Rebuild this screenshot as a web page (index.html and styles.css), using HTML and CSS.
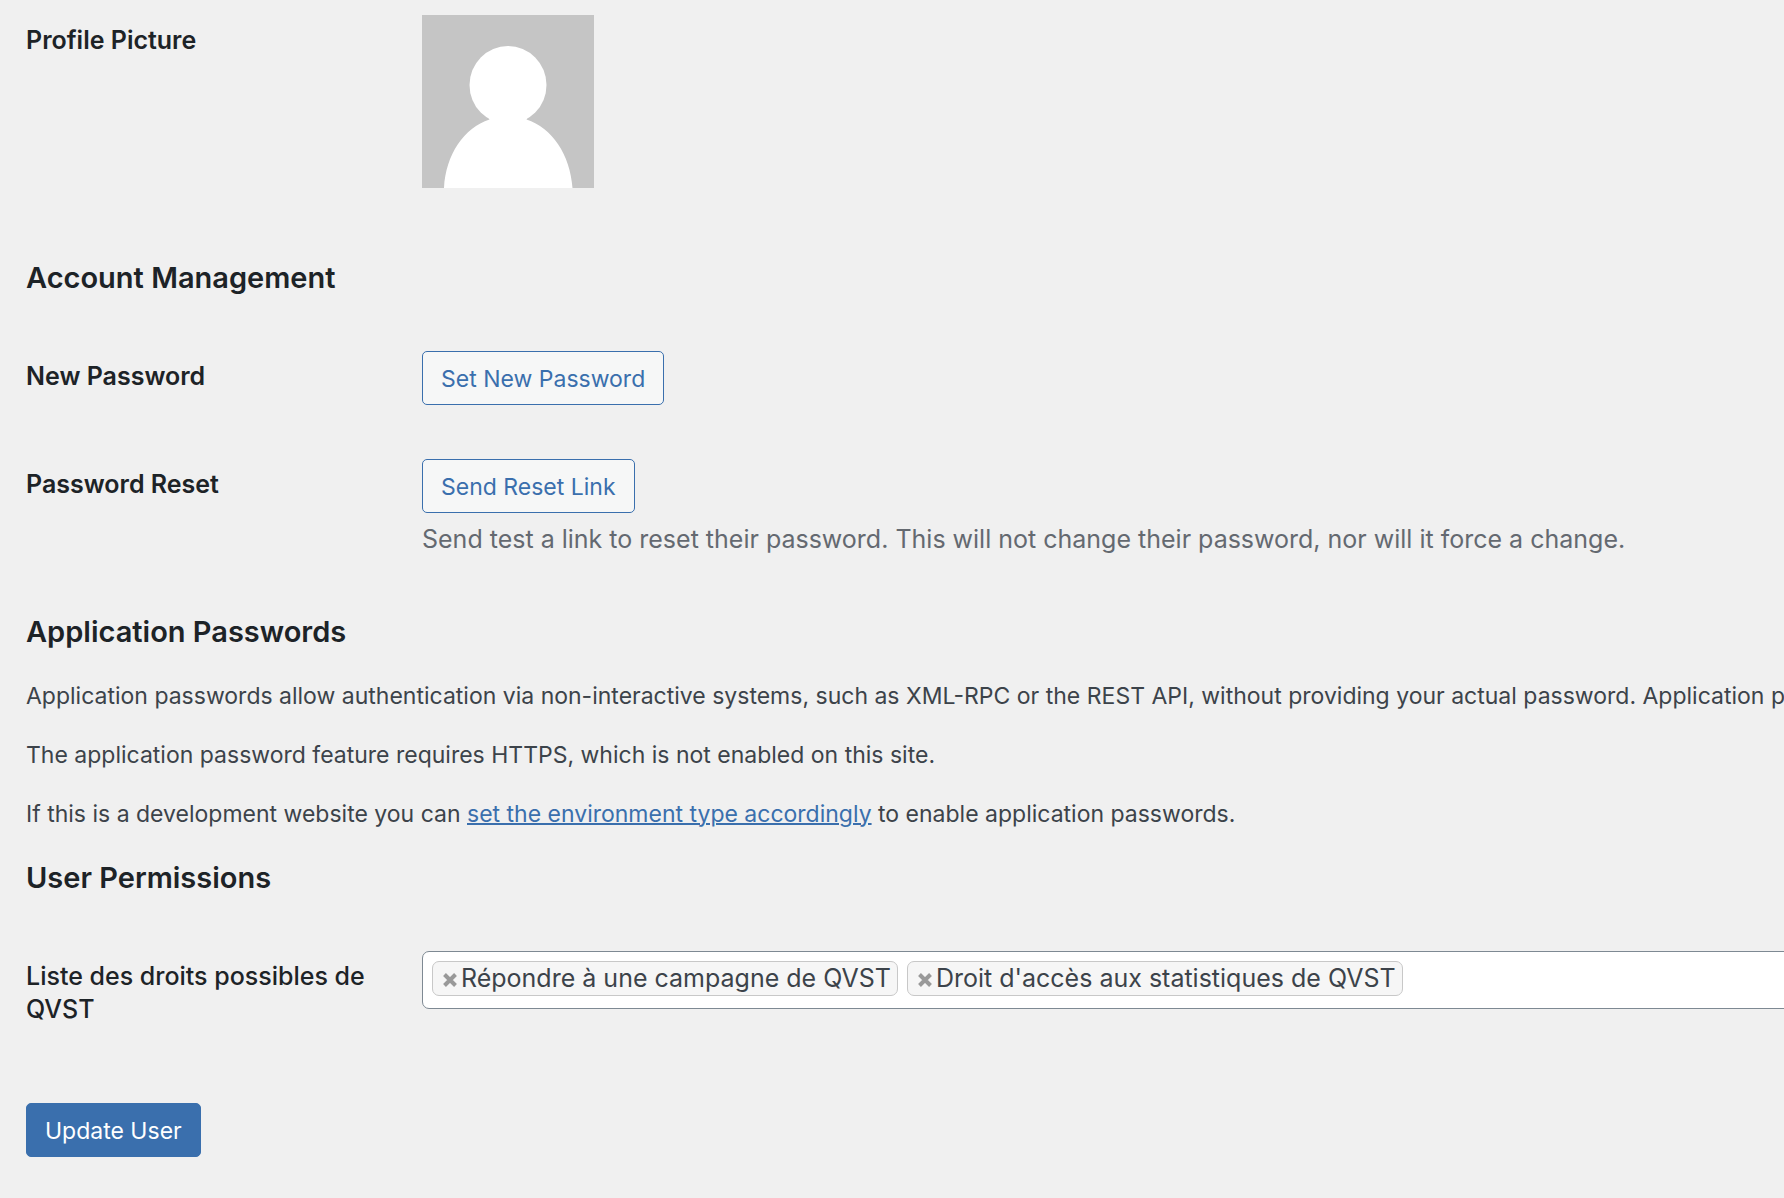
FILE: index.html
```html
<!DOCTYPE html>
<html lang="en">
<head>
<meta charset="utf-8">
<title>Edit User</title>
<link rel="stylesheet" href="styles.css">
</head>
<body>
<form class="profile">
  <div class="row">
    <div class="label">Profile Picture</div>
    <svg class="avatar" viewBox="0 0 172 173" role="img" aria-label="Avatar">
      <rect width="172" height="173" fill="#c5c5c5"/>
      <ellipse cx="86" cy="70" rx="38.500" ry="39" fill="#fff"/>
      <path d="M22 173C24 139 42 113 67.500 104.500L66 102H106L104.500 104.500C130 113 148 139 150.500 173Z" fill="#fff"/>
    </svg>
  </div>

  <h2 class="title title-first">Account Management</h2>
  <div class="row">
    <div class="label">New Password</div>
    <div><button type="button" class="button">Set New Password</button></div>
  </div>
  <div class="row row-next">
    <div class="label">Password Reset</div>
    <div>
      <button type="button" class="button">Send Reset Link</button>
      <p class="description">Send test a link to reset their password. This will not change their password, nor will it force a change.</p>
    </div>
  </div>

  <h2 class="title title-section">Application Passwords</h2>
  <div class="copy">
    <p>Application passwords allow authentication via non-interactive systems, such as XML-RPC or the REST API, without providing your actual password. Application passwords</p>
    <p>The application password feature requires HTTPS, which is not enabled on this site.</p>
    <p>If this is a development website you can <a href="#">set the environment type accordingly</a> to enable application passwords.</p>
  </div>

  <h2 class="title">User Permissions</h2>
  <div class="row">
    <label class="label label-light" for="rights">Liste des droits possibles de QVST</label>
    <div class="multi">
      <span class="tag"><button type="button" class="remove" aria-label="Remove"><svg viewBox="0 0 14 14"><path d="M1.500 1.500L12.500 12.500M12.500 1.500L1.500 12.500"/></svg></button>Répondre à une campagne de QVST</span>
      <span class="tag"><button type="button" class="remove" aria-label="Remove"><svg viewBox="0 0 14 14"><path d="M1.500 1.500L12.500 12.500M12.500 1.500L1.500 12.500"/></svg></button>Droit d'accès aux statistiques de QVST</span>
      <input class="search" id="rights" type="text">
    </div>
  </div>

  <button type="submit" class="button button-primary">Update User</button>
</form>
</body>
</html>
```
FILE: styles.css
```css
* { box-sizing: border-box; }

body {
  margin: 0;
  background: #f0f0f0;
  color: #3c434a;
  font-family: Inter, "Liberation Sans", sans-serif;
  font-size: 23px;
  line-height: 35px;
  overflow-x: hidden;
}

.profile { padding: 15px 0 40px 26px; overflow-x: hidden; }

.row {
  display: grid;
  grid-template-columns: 350px minmax(0, 1fr);
  column-gap: 46px;
  align-items: start;
}
.row-next { margin-top: 54px; }

.label {
  padding-top: 9px;
  color: #1d2327;
  font-size: 25px;
  font-weight: 600;
  line-height: 33px;
}
.label-light { font-weight: 500; }

.avatar { display: block; width: 172px; height: 173px; }

.title {
  margin: 25px 0 52px;
  color: #1d2327;
  font-size: 29px;
  font-weight: 600;
  line-height: 42px;
}
.title-first { margin-top: 69px; }
.title-section { margin: 53px 0 26px; }

.button {
  display: block;
  height: 54px;
  padding: 2px 18px 0;
  border: 1px solid #3a6fad;
  border-radius: 5px;
  background: #f6f7f7;
  color: #3a6fad;
  font: inherit;
}
.button-primary { margin-top: 77px; background: #3a6fad; color: #fff; }

.description {
  margin: 8px 0 0;
  color: #646970;
  font-size: 25px;
  line-height: 37px;
}

.copy { display: flex; flex-direction: column; gap: 24px; }
.copy p { margin: 0; white-space: nowrap; }
.copy a { color: #3a6fad; text-decoration-thickness: 2px; }

.multi {
  display: flex;
  gap: 9px;
  height: 58px;
  margin-right: -20px;
  padding: 9px;
  border: 1px solid #7e8993;
  border-radius: 7px;
  background: #fff;
}
.tag {
  display: flex;
  align-items: center;
  height: 35px;
  padding: 0 6px 0 8px;
  border: 1px solid #c8c8c8;
  border-radius: 7px;
  background: #f6f6f6;
  font-size: 25px;
  line-height: 33px;
  white-space: nowrap;
}
.remove {
  display: flex;
  padding: 2px 4px 0 2px;
  border: 0;
  background: none;
}
.remove svg {
  width: 14px;
  height: 14px;
  stroke: #999;
  stroke-width: 4;
}
.search {
  flex: 1;
  min-width: 0;
  height: 35px;
  border: 0;
  background: none;
  font: inherit;
  outline: none;
}
```
